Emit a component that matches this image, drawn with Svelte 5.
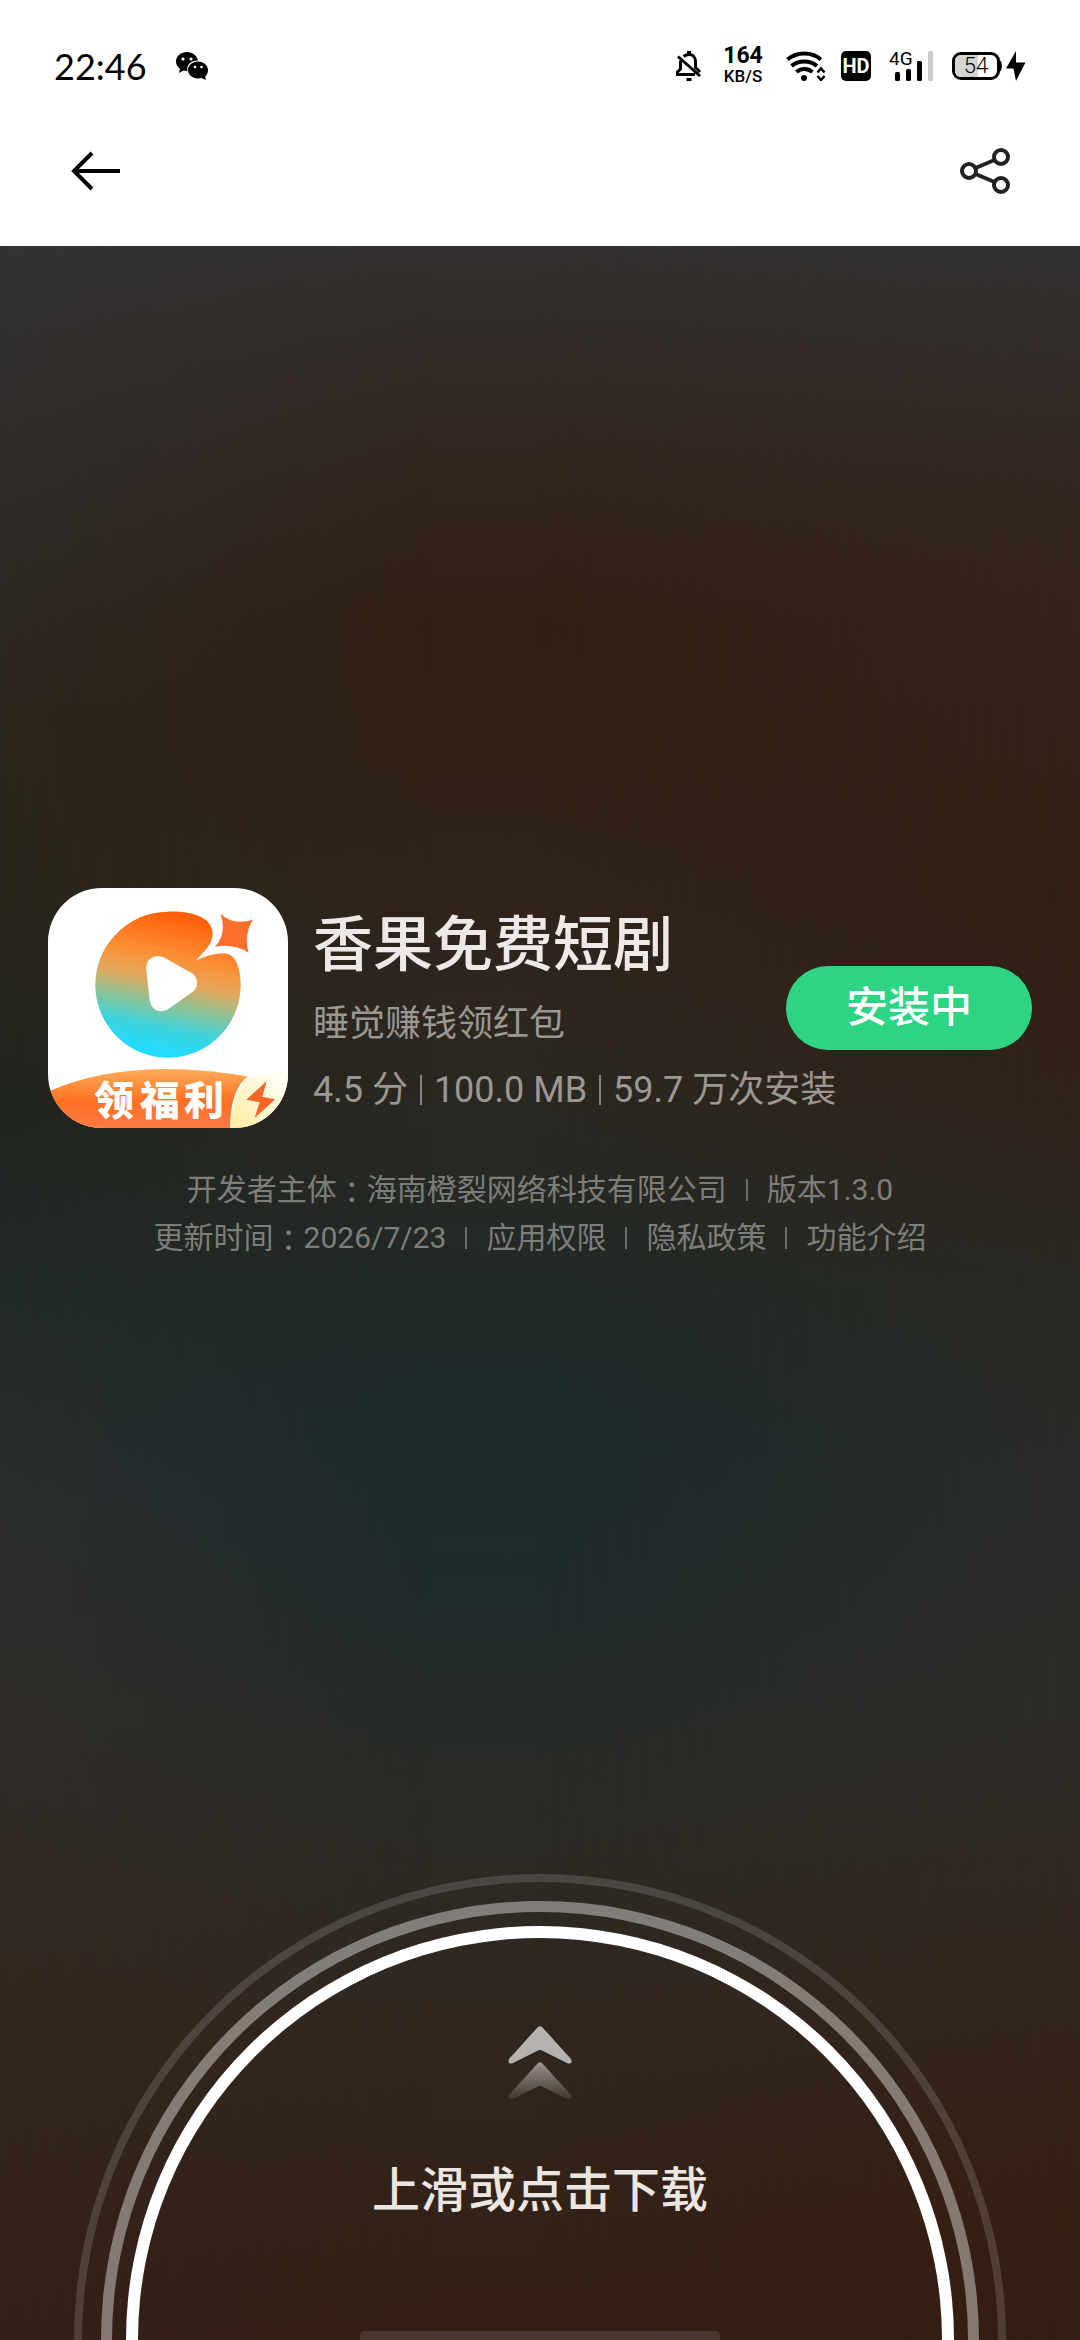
<script lang="ts">
  const time = '22:46';
  const battery = 54;

  const app = {
    name: '香果免费短剧',
    slogan: '睡觉赚钱领红包',
    badge: '领福利',
    facts: ['4.5 分', '100.0 MB', '59.7 万次安装']
  };

  const links = ['应用权限', '隐私政策', '功能介绍'];
</script>

<div class="page">
  <header>
    <div class="status">
      <span class="time">{time}</span>
      <svg class="wechat" width="32" height="30" viewBox="0 0 32 30" aria-hidden="true">
        <path d="M11 1C5 1 0 5 0 10.500c0 3 1.500 5.500 4 7.200L3 22l4.500-2.500c1.200.3 2.500.5 4 .4C10 14 15 9.300 22 9.500 21 4.500 16.500 1 11 1Z" />
        <path d="M22 10.500c-5.600 0-10 3.800-10 8.500s4.400 8.500 10 8.500c1.200 0 2.400-.2 3.500-.5L30 29l-1-3.500c2-1.500 3-3.800 3-6.500 0-4.700-4.400-8.500-10-8.500Z" />
        <g fill="#fff">
          <circle cx="7" cy="8" r="1.600" />
          <circle cx="15" cy="8" r="1.600" />
          <circle cx="19" cy="16" r="1.300" />
          <circle cx="25.500" cy="16" r="1.300" />
        </g>
      </svg>

      <div class="indicators">
        <svg width="26" height="30" viewBox="0 0 26 30" fill="none" stroke="#000" stroke-width="3" aria-hidden="true">
          <path d="M7.500 5.500C9 4.300 10.500 3.500 13 3.500c4 0 6.500 3 6.500 7V17M4.500 9.500V18L1.500 21v2.500H19" />
          <path d="M2 5.500 24 25" />
          <path d="M11 1.500h4M10.500 28.500h5" />
          <path d="m19 16 5 5" />
        </svg>
        <div class="speed">
          <span class="rate">164</span>
          <span class="unit">KB/S</span>
        </div>
        <svg class="wifi" width="40" height="30" viewBox="0 0 40 30" fill="none" stroke="#000" aria-hidden="true">
          <path stroke-width="4" d="M1.500 8.500C11 .5 25.500.5 35 8.500M5.500 15c7-6 18.500-6 25.500 0M10.500 21c4.500-4 11-4 16 0" />
          <circle cx="18" cy="27" r="3" fill="#000" stroke="none" />
          <path stroke-width="2.500" d="m31.500 21.500 3.500-4 3.500 4M31.500 25l3.500 4 3.500-4" />
        </svg>
        <span class="hd">HD</span>
        <div class="cell">
          <span>4G</span>
          <svg width="40" height="30" viewBox="0 0 40 30" aria-hidden="true">
            <rect x="1" y="21" width="5" height="9" rx="1.500" />
            <rect x="12" y="18" width="5" height="12" rx="1.500" />
            <rect x="23" y="10" width="5" height="20" rx="1.500" />
            <rect x="34" y="0" width="5" height="30" rx="1.500" fill="#ccc" />
          </svg>
        </div>
        <div class="battery">
          <div class="shell">
            <div class="level" style:width="{battery}%"></div>
            <span>{battery}</span>
          </div>
          <svg width="26" height="30" viewBox="0 0 26 30" aria-hidden="true">
            <path d="M0 9.500c2.500 1.500 2.500 9.500 0 11Z" />
            <path d="M16 0 6 17.500h7.500L16 30l9.500-18.500H16Z" />
          </svg>
        </div>
      </div>
    </div>

    <nav>
      <button class="icon-button" aria-label="返回">
        <svg width="50" height="40" viewBox="0 0 50 40" fill="none" stroke="#000" stroke-width="4">
          <path d="M49 20H4M21 2 3 20l18 18" />
        </svg>
      </button>
      <button class="icon-button" aria-label="分享">
        <svg width="50" height="46" viewBox="0 0 50 46" fill="none" stroke="#222" stroke-width="4">
          <circle cx="9" cy="23" r="7" />
          <circle cx="41" cy="9" r="7" />
          <circle cx="41" cy="37" r="7" />
          <path d="m15.500 20 19-8M15.500 26l19 8" />
        </svg>
      </button>
    </nav>
  </header>

  <main>
    <section class="app">
      <svg class="logo" width="240" height="240" viewBox="54 54 720 720" aria-hidden="true">
        <defs>
          <linearGradient id="fruit" gradientUnits="userSpaceOnUse" x1="470" y1="140" x2="385" y2="550">
            <stop offset="0" stop-color="#ff5f08" />
            <stop offset=".3" stop-color="#fc8f35" />
            <stop offset=".48" stop-color="#e2a75c" />
            <stop offset=".64" stop-color="#8fc194" />
            <stop offset=".82" stop-color="#3bd3dd" />
            <stop offset="1" stop-color="#20dcff" />
          </linearGradient>
          <linearGradient id="ribbon" x1="0" y1="0" x2="0" y2="1">
            <stop offset="0" stop-color="#ffad59" />
            <stop offset=".55" stop-color="#ff7022" />
            <stop offset="1" stop-color="#ff7a45" />
          </linearGradient>
          <linearGradient id="corner" x1="1" y1="0" x2="0" y2="1">
            <stop offset=".2" stop-color="#fffef2" />
            <stop offset="1" stop-color="#ffec9a" />
          </linearGradient>
        </defs>
        <rect x="54" y="54" width="720" height="720" fill="#fff" />
        <path
          fill="url(#fruit)"
          d="M414 125C488 123 548 142 548 192C548 222 524 243 497 272C530 255 560 249 590 251C620 256 632 300 632 345C632 465 534 563 414 563C294 563 196 465 196 345C196 225 294 125 414 125Z"
        />
        <path
          fill="#fff"
          d="M385 259C358 259 347 275 349 300L359 390C363 420 390 432 415 417L488 365C506 352 506 322 486 310L410 267C400 262 395 260 385 259Z"
        />
        <path fill="#fb6f2b" d="M571 131Q612 168 669 149Q640 195 656 248Q612 220 555 230Q592 190 571 131Z" />
        <path fill="url(#ribbon)" d="M54 665Q200 599 400 597Q540 597 680 624V774H54Z" />
        <path fill="url(#corner)" stroke="#fff" stroke-width="5" d="M657 619Q601 660 603 780H780V600Z" />
        <path fill="#fa6426" d="M710 633 649 689 689 697 674 743 736 688 697 680Z" />
        <text class="badge" x="192 329 462" y="734">{app.badge}</text>
      </svg>

      <div class="info">
        <h1>{app.name}</h1>
        <p class="slogan">{app.slogan}</p>
        <ul class="facts">
          {#each app.facts as fact}
            <li>{fact}</li>
          {/each}
        </ul>
      </div>

      <button class="install">安装中</button>
    </section>

    <section class="legal">
      <p>
        <span>开发者主体<i>：</i>海南橙裂网络科技有限公司</span>
        <span>版本1.3.0</span>
      </p>
      <p>
        <span>更新时间<i>：</i>2026/7/23</span>
        {#each links as link}
          <a href="#{link}">{link}</a>
        {/each}
      </p>
    </section>

    <button class="ring outer">
      <span class="ring middle">
        <span class="ring inner">
          <svg width="64" height="74" viewBox="0 0 64 74" aria-hidden="true">
            <defs>
              <linearGradient id="fade" x1="0" y1="0" x2="0" y2="1">
                <stop offset="0" stop-color="#fff" stop-opacity=".5" />
                <stop offset="1" stop-color="#fff" stop-opacity=".08" />
              </linearGradient>
            </defs>
            <path fill="#b5b2b0" d="M29.500 1.500Q32-1 34.500 1.500L63 33Q65 38 60 37.500L34 24.500Q32 23.500 30 24.500L4 37.500Q-1 38 1 33Z" />
            <path fill="url(#fade)" d="M29.500 37.500Q32 35 34.500 37.500L63 69Q65 74 60 73.500L34 60.500Q32 59.500 30 60.500L4 73.500Q-1 74 1 69Z" />
          </svg>
          <span class="hint">上滑或点击下载</span>
        </span>
      </span>
    </button>
    <div class="home-bar"></div>
  </main>
</div>

<style>
  :global(body) {
    margin: 0;
    background: #31231a;
  }
  .page {
    display: flex;
    flex-direction: column;
    min-height: 100vh;
    font-family: Roboto, 'Noto Sans CJK SC', sans-serif;
  }
  button {
    padding: 0;
    border: 0;
    background: none;
    color: inherit;
    font: inherit;
    cursor: pointer;
  }
  svg {
    display: block;
    flex: none;
  }

  header {
    background: #fff;
    color: #000;
  }
  .status {
    display: flex;
    align-items: center;
    height: 60px;
    padding: 36px 54px 0;
  }
  .time {
    font: 36px/60px Lato, sans-serif;
  }
  .wechat {
    margin-left: 29px;
  }
  .indicators {
    display: flex;
    align-items: center;
    margin-left: auto;
  }
  .speed {
    display: grid;
    width: 42px;
    margin: 0 22px 0 20px;
    text-align: center;
  }
  .rate {
    font-size: 23px;
    font-weight: 700;
    line-height: 20px;
  }
  .unit {
    font-size: 17px;
    font-weight: 500;
    line-height: 20px;
  }
  .hd {
    width: 30px;
    margin: 0 18px 0 15px;
    border-radius: 5px;
    background: #000;
    color: #fff;
    text-align: center;
    font: 700 20px/30px Roboto, sans-serif;
  }
  .cell {
    position: relative;
    padding-left: 5px;
  }
  .cell span {
    position: absolute;
    top: 0;
    left: 0;
    font-size: 19px;
    line-height: 16px;
  }
  .battery {
    display: flex;
    margin-left: 18px;
  }
  .shell {
    position: relative;
    box-sizing: border-box;
    width: 48px;
    height: 28px;
    margin-top: 1px;
    overflow: hidden;
    border: 3px solid #000;
    border-radius: 9px;
    text-align: center;
    font-size: 22px;
    font-weight: 300;
    line-height: 22px;
  }
  .level {
    position: absolute;
    inset: 0 auto 0 0;
    background: #d4d4d4;
  }
  .shell span {
    position: relative;
  }

  nav {
    display: flex;
    align-items: center;
    justify-content: space-between;
    height: 150px;
    padding: 0 70px 0 71px;
  }

  main {
    position: relative;
    isolation: isolate;
    display: flex;
    flex: 1;
    flex-direction: column;
    padding-top: 642px;
    background: linear-gradient(
      #333130,
      #33261f 10%,
      #311f13 18%,
      #312014 24%,
      #30241c 32%,
      #2a2822 41%,
      #212a27 50%,
      #1c2a2c 57%,
      #202b2b 65%,
      #2a2b26 74%,
      #31271f 84%,
      #341f12
    );
  }
  main::before,
  main::after {
    content: '';
    position: absolute;
    inset: 0;
    z-index: -1;
  }
  main::before {
    background: linear-gradient(
      #343333,
      #302d2b 10%,
      #2b251c 22%,
      #29251b 31%,
      #20241e 41%,
      #222a28 50%,
      #2b2e2e 60%,
      #302d2a 70%,
      #33271e 84%,
      #33201a
    );
    mask-image: linear-gradient(to right, #000, transparent 40%);
  }
  main::after {
    background: linear-gradient(
      #333232,
      #34261f 12%,
      #342219 22%,
      #321f13 31%,
      #31221a 41%,
      #292923 50%,
      #2a2c2a 60%,
      #2e2c28 70%,
      #33251c 84%,
      #361f12 94%,
      #341e12
    );
    mask-image: linear-gradient(to left, #000, transparent 50%);
  }

  .app {
    display: flex;
    align-items: center;
    padding: 0 48px;
  }
  .logo {
    border-radius: 54px;
  }
  .badge {
    fill: #fff;
    font: 900 120px 'Noto Sans CJK SC', sans-serif;
  }
  .info {
    flex: 1;
    min-width: 0;
    margin-left: 25px;
    padding-top: 8px;
    color: #9b9792;
    font-size: 36px;
    line-height: 66px;
    white-space: nowrap;
  }
  h1 {
    margin: 0;
    color: #eee9e6;
    font-size: 60px;
    font-weight: 500;
    line-height: 90px;
  }
  .slogan {
    margin: 0;
  }
  .facts {
    display: flex;
    margin: 0;
    padding: 0;
    list-style: none;
  }
  .facts li {
    display: flex;
    align-items: center;
  }
  .facts li + li::before {
    content: '';
    width: 2px;
    height: 30px;
    margin: 0 12px;
    background: #85817c;
  }
  .install {
    flex: none;
    width: 246px;
    height: 84px;
    border-radius: 42px;
    background: #2cd483;
    color: #fff;
    font-size: 42px;
    font-weight: 500;
    line-height: 82px;
  }

  .legal {
    margin-top: 38px;
    color: #7d7e79;
    font-size: 30px;
    line-height: 48px;
  }
  .legal p {
    display: flex;
    justify-content: center;
    margin: 0;
  }
  .legal p > * {
    display: flex;
    align-items: center;
    color: inherit;
    text-decoration: none;
  }
  .legal p > * + *::before {
    content: '';
    width: 2px;
    height: 22px;
    margin: 0 19px;
    background: #6c6d68;
  }
  i {
    font-family: 'Noto Sans CJK TC', sans-serif;
    font-style: normal;
  }

  .ring {
    display: block;
    box-sizing: border-box;
    border-style: solid;
    border-bottom: 0;
    border-radius: 9999px 9999px 0 0;
  }
  .outer {
    width: calc(100% - 148px);
    aspect-ratio: 2 / 1;
    margin: auto auto 0;
    padding: 19px 19px 0;
    border-width: 8px 8px 0;
    border-color: rgb(255 255 255 / 14%);
  }
  .middle {
    height: 100%;
    padding: 14px 14px 0;
    border-width: 11px 11px 0;
    border-color: rgb(255 255 255 / 40%);
  }
  .inner {
    display: flex;
    flex-direction: column;
    align-items: center;
    height: 100%;
    padding-top: 88px;
    border-width: 12px 12px 0;
    border-color: #fff;
  }
  .hint {
    margin-top: 59px;
    color: #ece6e3;
    font-size: 48px;
    font-weight: 500;
    line-height: 64px;
  }
  .home-bar {
    position: absolute;
    bottom: 0;
    left: 50%;
    width: 360px;
    height: 9px;
    margin-left: -180px;
    border-radius: 5px 5px 0 0;
    background: #47372f;
  }
</style>
